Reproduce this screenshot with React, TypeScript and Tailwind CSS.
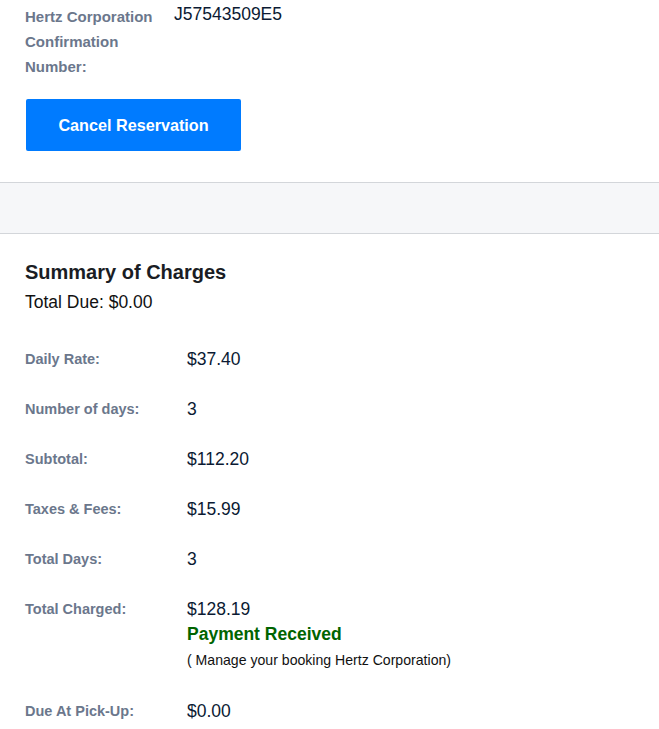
import React from "react";

const rows: { label: string; value: string }[] = [
  { label: "Daily Rate:", value: "$37.40" },
  { label: "Number of days:", value: "3" },
  { label: "Subtotal:", value: "$112.20" },
  { label: "Taxes & Fees:", value: "$15.99" },
  { label: "Total Days:", value: "3" },
];

export default function App() {
  return (
    <div className="w-[659px] min-h-[729px] bg-white font-['Liberation_Sans',Arial,sans-serif] text-[#0b1a33]">
      <div className="px-[25px] pt-[4px]">
        <div className="flex items-start">
          <div className="w-[135px] mr-[14px] shrink-0 text-[15px] leading-[25px] font-bold text-[#6b778c]">
            Hertz Corporation Confirmation Number:
          </div>
          <div className="text-[17.5px] leading-[21px] text-[#0b1a33]">J57543509E5</div>
        </div>
        <button className="mt-[20px] ml-[1px] w-[215px] h-[52px] rounded-[2px] bg-[#007bff] text-white text-[16.2px] font-bold">
          Cancel Reservation
        </button>
      </div>
      <div className="mt-[31px] h-[52px] bg-[#f6f7f9] border-y border-[#d3d6da]" />
      <div className="px-[25px] pt-[24px] pb-[10px]">
        <h2 className="text-[20px] leading-[28px] font-bold text-[#1a1d24]">Summary of Charges</h2>
        <div className="mt-[4px] text-[17.5px] leading-[24px] text-[#111]">Total Due: $0.00</div>
        <div className="mt-[33px] flex flex-col gap-[25px]">
          {rows.map((r) => (
            <div key={r.label} className="flex items-start">
              <div className="w-[162px] shrink-0 text-[14.5px] leading-[25px] font-bold text-[#6b778c]">{r.label}</div>
              <div className="text-[17.5px] leading-[25px]">{r.value}</div>
            </div>
          ))}
          <div className="flex items-start">
            <div className="w-[162px] shrink-0 text-[14.5px] leading-[25px] font-bold text-[#6b778c]">Total Charged:</div>
            <div className="flex flex-col">
              <div className="text-[17.5px] leading-[25px]">$128.19</div>
              <div className="text-[17.5px] leading-[25px] font-bold text-[#006400]">Payment Received</div>
              <div className="mt-[1px] text-[14.1px] leading-[25px] text-[#111]">( Manage your booking Hertz Corporation)</div>
            </div>
          </div>
          <div className="flex items-start pt-[1px]">
            <div className="w-[162px] shrink-0 text-[14.5px] leading-[25px] font-bold text-[#6b778c]">Due At Pick-Up:</div>
            <div className="text-[17.5px] leading-[25px]">$0.00</div>
          </div>
        </div>
      </div>
    </div>
  );
}
